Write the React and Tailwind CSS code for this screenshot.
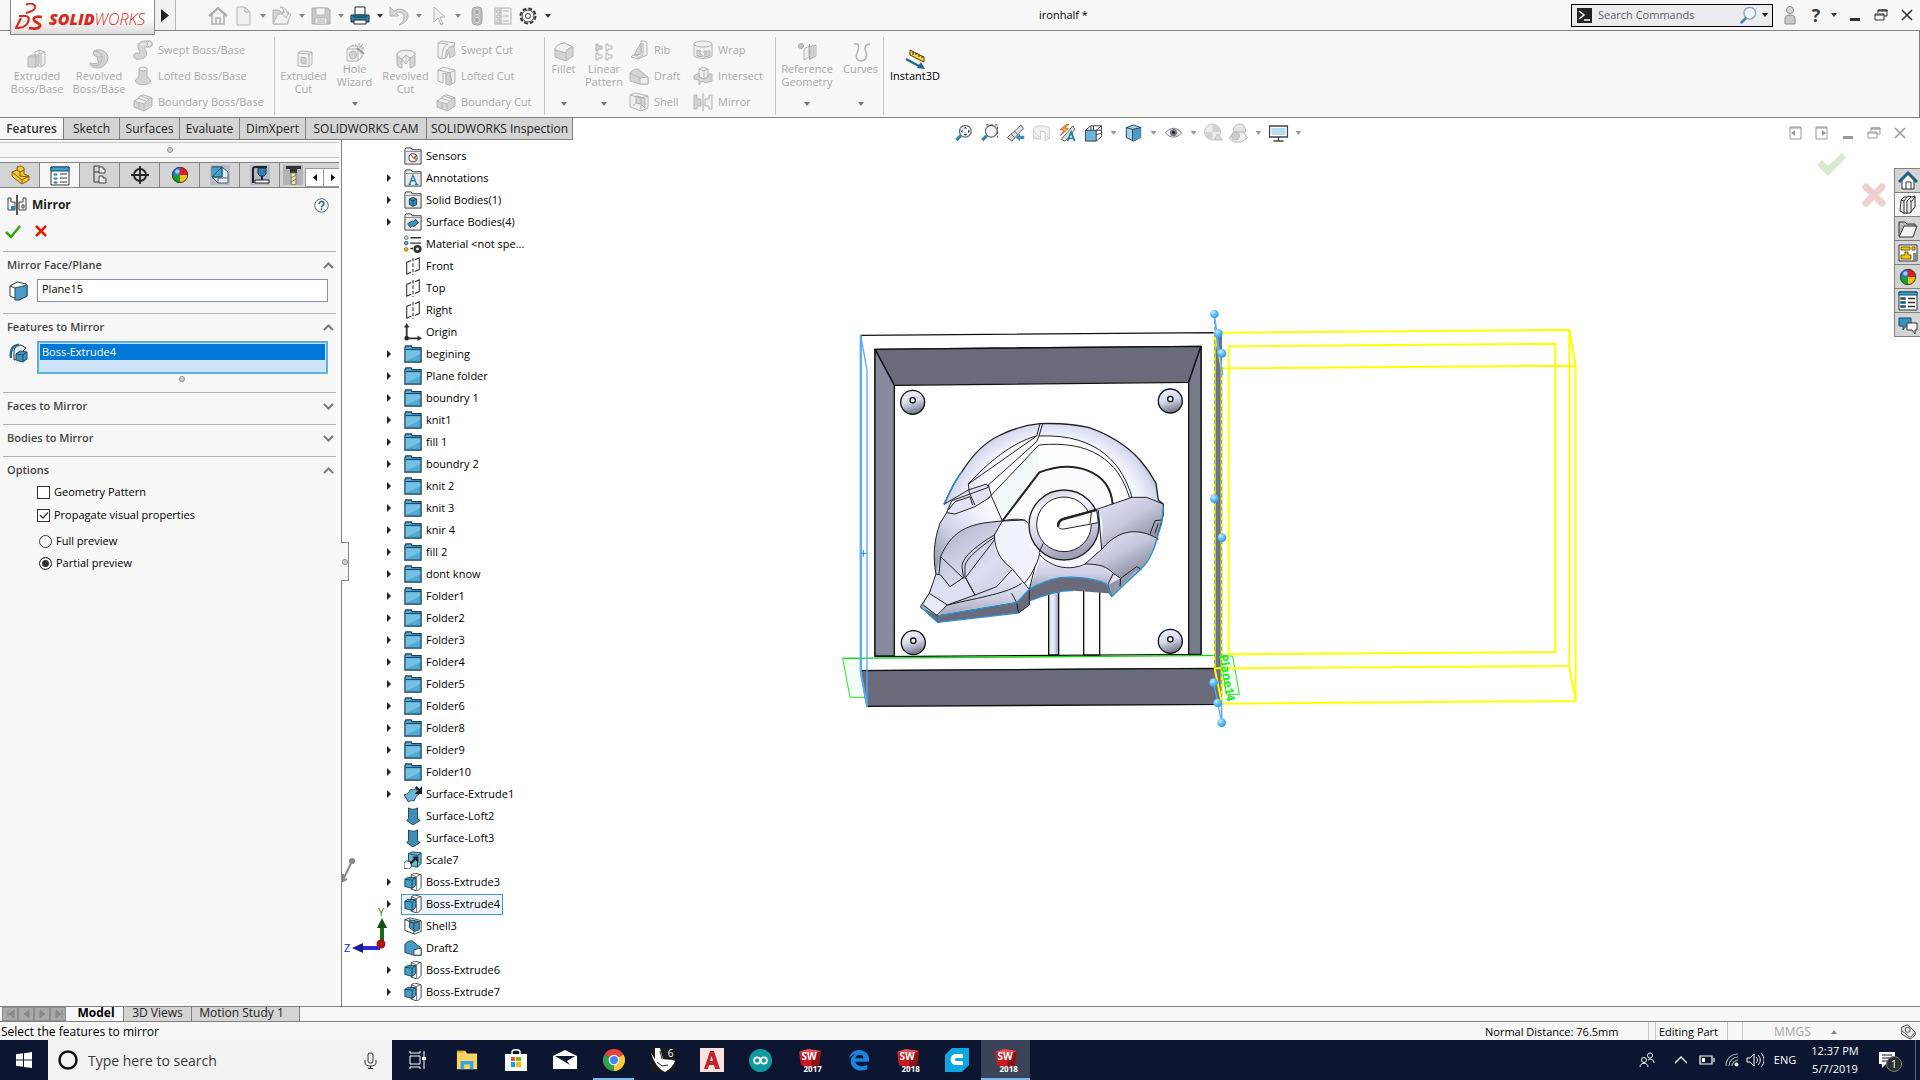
import React from "react";

const Svg = ({ s = 20, vb = "0 0 20 20", className = "", children }) => (
  <svg width={s} height={s} viewBox={vb} fill="none" aria-hidden="true" className={"shrink-0 " + className}>{children}</svg>
);
const Caret = ({ className = "text-[#555]" }) => (
  <svg width="6" height="4" viewBox="0 0 6 4" aria-hidden="true" className={"shrink-0 " + className}><path d="M0 0h6L3 4z" fill="currentColor" /></svg>
);

/* ---------- ribbon icons ---------- */
const g = { stroke: "#b4b4b4", fill: "#f0f0f0", strokeLinejoin: "round" };
const gd = { stroke: "#b4b4b4", fill: "#d4d4d4", strokeLinejoin: "round" };
const R = {
  extBoss: <Svg><path {...g} d="M8 3l4-2 6 2v12l-4 3-6-3z" /><path stroke="#b4b4b4" d="M12 1v3l2 1v13M14 5l4-2" /><path {...gd} d="M1 8l3-2h8v9l-3 3H1z" /><path stroke="#b4b4b4" d="M1 8h8v10M9 8l3-2" /></Svg>,
  revBoss: <Svg><path {...gd} d="M5 2c6-3 13 0 14 6 0 6-5 11-11 11-4 0-7-2-7-5 3 1 7 1 9-1-2-1-2-3-1-5-3 0-6-3-4-6z" /><path stroke="#b4b4b4" d="M5 2c4 0 8 2 8 6s-1 7-5 9M9 8l4 0M1 14c2 2 5 3 7 3" /></Svg>,
  swept: <Svg><path {...gd} d="M1 15c0-2 4-3 5-1 1-1 0-4-1-7-1-4 3-6 7-6h5c3 1 3 5 0 6h-4c-2 0-1 2 0 4 2 5-2 8-6 8-4 1-7-1-6-4z" /><ellipse cx="16.500" cy="4" rx="2" ry="3" {...g} /><path stroke="#fff" d="M8 5c1-1 3-1 5-1" /></Svg>,
  loft: <Svg><path {...gd} d="M6 3h8v7l4 5c-2 5-14 5-16 0l4-5z" /><ellipse cx="10" cy="3" rx="4" ry="2" {...g} /></Svg>,
  boundary: <Svg><path {...gd} d="M1 9c4-1 5-6 10-6l8 3v8l-8 5-10-4z" /><path {...g} d="M1 9c4-1 5-6 10-6l8 3c-4 1-5 3-8 6z" /><path stroke="#b4b4b4" d="M11 12v7M5 6l8 3M8 4l8 3M6 11v6" /></Svg>,
  extCut: <Svg><path {...g} d="M4 4l3-2 11 1v12l-3 3-11-1z" /><path {...g} d="M4 4l11 1v13" /><path {...gd} d="M7 8l5 1v6l-5-1z" /><path stroke="#b4b4b4" d="M15 5l3-2" /></Svg>,
  hole: <Svg><path {...g} d="M2 7l4-3h11v11l-4 4H2z" /><path stroke="#b4b4b4" d="M2 7h11v12M13 7l4-3" /><ellipse cx="8" cy="13" rx="3.500" ry="4" {...gd} /><path stroke="#999" strokeWidth="2" d="M12 6l7 6" /><path stroke="#aaa" d="M10 2l1 2M14 1v2M18 2l-2 2M19 6h-2M7 3l2 1" /></Svg>,
  revCut: <Svg><path {...gd} d="M1 5c2-5 16-5 18 0v11c-1 2-4 3-5 3V9l-4-3-4 4v9c-2 0-4-1-5-3z" /><path {...g} d="M1 5c2-5 16-5 18 0-1 2-3 3-5 4l-4-3-4 4c-2-1-5-3-5-5z" /><path stroke="#b4b4b4" d="M10 6v9M6 10l4 5 4-6" /></Svg>,
  swCut: <Svg><path {...g} d="M2 3l4-2 13 2-1 3c-5 0-8 4-8 9v3l-5 1-3-2z" /><path {...gd} d="M10 15c0-5 3-9 8-9l1 9-5 3-1-6-3 6z" /><path stroke="#b4b4b4" d="M2 3l10 1c-4 2-6 6-6 14" /></Svg>,
  loftCut: <Svg><path {...g} d="M2 4l5-3 12 3v12l-5 3-4-1V8L7 7v10l-5-2z" /><path {...gd} d="M10 8l4-2 2 11-2 2-4-1z" /><path stroke="#b4b4b4" d="M2 4l12 3v12M14 7l5-3" /></Svg>,
  fillet: <Svg><path {...gd} d="M1 8c0-4 4-6 9-7l9 4v9l-7 5-11-4z" /><path {...g} d="M1 8c0-4 4-6 9-7l9 4c-5 1-7 3-7 6z" /><path stroke="#b4b4b4" d="M12 11v8" /></Svg>,
  linear: <Svg><path {...gd} d="M2 2h2v2h4v3H4v2H2z" /><path {...g} fill="none" d="M12 2h2v2h4v3h-4v2h-2zM2 11h2v2h4v3H4v2H2zM12 11h2v2h4v3h-4v2h-2z" /></Svg>,
  rib: <Svg><path {...g} d="M12 1h4l2 2v12l-9 4-7-2 2-2 4 1 4-3z" /><path {...gd} d="M12 3v11L5 15z" /><path stroke="#b4b4b4" d="M14 3v12l-6 3" /></Svg>,
  draft: <Svg><path {...gd} d="M1 7c3-4 6-4 8-4l10 8v7H11L1 15z" /><path {...g} d="M11 12l8-1v7h-8z" /><path stroke="#b4b4b4" d="M1 7l10 5" /></Svg>,
  shell: <Svg><path {...g} d="M1 3l6-2 12 3v12l-7 3-11-4z" /><path {...gd} d="M7 4l9 2v10l-4-4-5-1z" /><path stroke="#b4b4b4" d="M1 3l11 3v13M12 6l7-2M7 11l-3 3" /></Svg>,
  wrap: <Svg><path {...g} d="M1 4v12c2 3 16 3 18 0V4" /><ellipse cx="10" cy="4" rx="9" ry="3" {...g} /><path {...gd} d="M4 10l4 1v1H6l3 3v2l-5-1zM11 11h6v5l-6 1v-2l3-2h-3z" /></Svg>,
  intersect: <Svg><path {...g} d="M6 3l4-2 5 2v8l-4 2-5-2z" /><path {...gd} d="M1 10l5-3v4l5 2 4-2V8l4 0v7l-6 2-4-2-3 4v-5l-5-1z" /><path stroke="#b4b4b4" d="M6 3l5 2v8M11 5l4-2" /></Svg>,
  mirror: <Svg><path stroke="#aaa" d="M10 1v18" /><path {...gd} d="M1 3h3v4h4v7H4v3H1z" /><path {...g} d="M19 3h-3v4h-4v7h4v3h3z" /></Svg>,
  refGeo: <Svg><circle cx="4" cy="4" r="2.500" fill="#c4c4c4" stroke="#aaa" /><path {...g} d="M7 7l5-3v11l-5 3zM13 5l6-2v11l-6 3z" /><path {...gd} d="M13 5l4-2v12l-4 2z" /><path stroke="#aaa" strokeDasharray="4 2" d="M12.500 2v17" /></Svg>,
  curves: <Svg><path stroke="#b4b4b4" strokeWidth="1.500" d="M3 2c6-2 5 5 3 9s0 8 4 8 7-4 5-9-1-8 4-8" /><circle cx="18" cy="2.500" r="1" fill="#bbb" /></Svg>,
  instant: <Svg><path d="M5 1l14 7v5L5 6z" fill="#ffd83a" stroke="#4a3a05" /><path d="M8 3v3M11 4v2M14 6v2M17 7v2" stroke="#222" /><path d="M1 10l13 7" stroke="#226488" strokeWidth="2" /><path d="M12 19l8 1-4-7z" fill="#226488" /></Svg>,
};

const Big = ({ icon, lines, w, low, caret, dark }) => (
  <button className={`flex h-full flex-col items-center text-center leading-[13px] ${w} ${low ? "pt-[18px]" : "pt-[11px]"} ${dark ? "text-black" : "text-[#a9a9a9]"}`}>
    {icon}
    {lines.map((l) => <span key={l} className="whitespace-nowrap">{l}</span>)}
    {caret && <span className="mt-auto pb-[11px]"><Caret className="text-[#777]" /></span>}
  </button>
);
const Col = ({ items, w }) => (
  <div className={`flex flex-col pt-[6px] pl-[3px] ${w}`}>
    {items.map(([icon, t]) => (
      <button key={t} className="flex h-[26px] items-center gap-[5px] whitespace-nowrap text-[#a9a9a9]">{icon}{t}</button>
    ))}
  </div>
);
const Sep = () => <div className="mt-[6px] h-[78px] w-px bg-[#c6c6c6]" />;

function TitleBar() {
  const c = "flex h-full w-[19px] items-center justify-center";
  const q = "#b0b0b0";
  return (
    <header className="relative z-10 flex h-[31px] shrink-0 items-center border-b border-[#808080] bg-[#f7f7f7]">
      <div className="ml-[10px] flex h-[35px] w-[145px] items-center self-start border-r border-b border-l border-[#858585] bg-gradient-to-b from-white via-white to-[#dcdcdc] pl-[4px] text-[#da291c]">
        <svg width="30" height="28" viewBox="0 0 30 28" fill="none" aria-hidden="true">
          <path d="M11 2c4-3 10-1 9 3-1 3-5 4-9 5" stroke="#da291c" strokeWidth="2" />
          <path d="M4 13h6c4 0 5 3 2 8-2 3-5 4-11 4l5-10" stroke="#da291c" strokeWidth="2.200" />
          <path d="M27 14c-5-1-9 0-8 3s7 3 6 6c-1 3-6 3-11 2" stroke="#da291c" strokeWidth="2.800" />
        </svg>
        <span className="pt-1 pl-[4px] text-[16px] leading-4 italic"><b className="font-extrabold">SOLID</b><span className="font-light">WORKS</span></span>
      </div>
      <button aria-label="Expand menu" className="flex h-[30px] w-[21px] items-center justify-center border-r border-[#b5b5b5] bg-[#f1f1f1]">
        <svg width="8" height="13" aria-hidden="true"><path d="M0 0l8 6.500L0 13z" fill="#222" /></svg>
      </button>
      <nav className="ml-[32px] flex h-full items-center pt-px">
        <button aria-label="Home" className="mr-[5px]"><Svg><path d="M2 10l8-8 8 8M4 9v9h12V9M8 18v-6h4v6" stroke={q} strokeWidth="1.500" fill="#f0f0f0" /><path d="M1 10l9-8 9 8" stroke="#aaa" strokeWidth="2" /></Svg></button>
        <button aria-label="New"><Svg><path d="M4 1h8l5 5v13H4z" {...g} /><path d="M12 1v5h5" stroke={q} /></Svg></button>
        <button aria-label="New options" className={c}><Caret className="text-[#888]" /></button>
        <button aria-label="Open"><Svg><path d="M1 4h6l2 2h7v12H1z" {...gd} /><path d="M1 18l5-10h13l-4 10z" {...g} /><path d="M8 1c5 0 7 3 7 6l2-1-3 6-4-5 2 0c0-3-1-5-4-6z" {...g} /></Svg></button>
        <button aria-label="Open options" className={c}><Caret className="text-[#888]" /></button>
        <button aria-label="Save"><Svg><path d="M1 2h16l2 2v14H1z" fill="#c9c9c9" stroke="#a8a8a8" /><path d="M5 2h9v7H5zM4 12h12v6H4z" fill="#f5f5f5" stroke="#b4b4b4" /><path d="M6 14h8M6 16h8" stroke="#aaa" /></Svg></button>
        <button aria-label="Save options" className={c}><Caret className="text-[#888]" /></button>
        <button aria-label="Print"><Svg><path d="M5 1h10v8H5z" fill="#fff" stroke="#222" /><path d="M1 9h18v7H1z" fill="#2e81a8" stroke="#0e3850" /><path d="M3 11h14" stroke="#0e3850" /><path d="M4 14h12v4H4z" fill="#fff" stroke="#222" /></Svg></button>
        <button aria-label="Print options" className={c}><Caret className="text-[#333]" /></button>
        <button aria-label="Undo"><Svg><path d="M1 1v9h9L7 7c4-2 8 0 8 4s-2 6-5 8c6-2 9-5 9-9 0-6-8-9-14-5z" {...gd} /></Svg></button>
        <button aria-label="Undo options" className={c}><Caret className="text-[#888]" /></button>
        <button aria-label="Select"><Svg><path d="M6 1v15l4-4 3 7 2-1-3-7h5z" {...g} /></Svg></button>
        <button aria-label="Select options" className={c}><Caret className="text-[#888]" /></button>
        <button aria-label="Rebuild"><Svg><rect x="5" y="1" width="10" height="18" rx="4" fill="#bcbcbc" stroke="#aaa" /><circle cx="10" cy="6" r="2.500" fill="#a0a0a0" stroke="#ddd" /><circle cx="10" cy="14" r="2.500" fill="#a0a0a0" stroke="#ddd" /></Svg></button>
        <button aria-label="File properties" className="ml-[6px]"><Svg><path d="M2 2h16v16H2z" {...g} /><path d="M4 4h3v3H4zM4 9h3v3H4zM4 14h3v3H4zM10 5h6M10 10h6M10 15h6M8 2v16" stroke="#b0b0b0" /></Svg></button>
        <button aria-label="Options" className="ml-[5px]"><Svg><circle cx="10" cy="10" r="7.500" stroke="#3a3a3a" strokeWidth="2" strokeDasharray="3.900 2" /><circle cx="10" cy="10" r="6" stroke="#3a3a3a" fill="#f7f7f7" /><circle cx="10" cy="10" r="2.500" stroke="#3a3a3a" /></Svg></button>
        <button aria-label="More options" className={c}><Caret className="text-[#333]" /></button>
      </nav>
      <h1 className="ml-[482px] flex-1 pt-px text-[11px] whitespace-nowrap text-black">ironhalf *</h1>
      <div className="flex h-[23px] w-[202px] items-center border border-black bg-[#ebebf0] pr-1 pl-[5px]">
        <Svg s={15} vb="0 0 15 15"><path d="M0 0h15v15H0z" fill="#222" /><path d="M2 3l5 4-5 4M7 12h6" stroke="#fff" strokeWidth="1.500" /></Svg>
        <input aria-label="Search Commands" placeholder="Search Commands" className="ml-[6px] w-full min-w-0 bg-transparent text-[11px] outline-none placeholder:text-[#5f5f5f]" />
        <button aria-label="Search"><Svg s={18}><circle cx="12" cy="8" r="6.500" fill="#eef6fc" stroke="#8fa5b5" strokeWidth="1.500" /><path d="M8 13l-6 6" stroke="#4a86b0" strokeWidth="3" /></Svg></button>
        <button aria-label="Search options" className="ml-[5px]"><Caret className="text-[#222]" /></button>
      </div>
      <button aria-label="Sign in" className="ml-[7px]"><Svg><path d="M5 19v-6c0-4 10-4 10 0v6z" fill="#c8c8c8" stroke="#8b8b8b" /><circle cx="10" cy="5" r="3.500" fill="#d8d8d8" stroke="#8b8b8b" /></Svg></button>
      <button aria-label="Help" className="ml-[7px] w-[18px] text-[18px] leading-5 font-bold text-[#3c3c3c]">?</button>
      <button aria-label="Help options" className="w-[17px] pl-[6px]"><Caret className="text-[#333]" /></button>
      <WinButtons color="#333" />
    </header>
  );
}
const WinButtons = ({ color, className = "" }) => (
  <div className={"flex items-center " + className}>
    <button aria-label="Minimize" className="w-[26px] pl-[5px]"><Svg s={16} vb="0 0 16 16"><path d="M3 11h10v3H3z" fill={color} /></Svg></button>
    <button aria-label="Restore" className="w-[26px] pl-[5px]"><Svg s={16} vb="0 0 16 16"><path d="M5 6V3h9v6h-3M5 3h9v1H5M2 7h9v6H2zM2 8h9" stroke={color} /></Svg></button>
    <button aria-label="Close" className="w-[26px] pl-[5px]"><Svg s={16} vb="0 0 16 16"><path d="M3 3l10 10M13 3L3 13" stroke={color} strokeWidth="1.500" /></Svg></button>
  </div>
);

function Ribbon() {
  return (
    <div className="flex h-[87px] shrink-0 border-r border-b border-[#808080] bg-[#f7f7f7] pl-[6px] text-[11px]">
      <Big low w="w-[62px]" icon={R.extBoss} lines={["Extruded", "Boss/Base"]} />
      <Big low w="w-[62px]" icon={R.revBoss} lines={["Revolved", "Boss/Base"]} />
      <Col w="w-[144px]" items={[[R.swept, "Swept Boss/Base"], [R.loft, "Lofted Boss/Base"], [R.boundary, "Boundary Boss/Base"]]} />
      <Sep />
      <div className="w-[3px]" />
      <Big low w="w-[51px]" icon={R.extCut} lines={["Extruded", "Cut"]} />
      <Big caret w="w-[51px]" icon={R.hole} lines={["Hole", "Wizard"]} />
      <Big low w="w-[51px]" icon={R.revCut} lines={["Revolved", "Cut"]} />
      <div className="w-[2px]" />
      <Col w="w-[111px]" items={[[R.swCut, "Swept Cut"], [R.loftCut, "Lofted Cut"], [R.boundary, "Boundary Cut"]]} />
      <Sep />
      <Big caret w="w-[37px]" icon={R.fillet} lines={["Fillet"]} />
      <Big caret w="w-[44px]" icon={R.linear} lines={["Linear", "Pattern"]} />
      <Col w="w-[64px]" items={[[R.rib, "Rib"], [R.draft, "Draft"], [R.shell, "Shell"]]} />
      <Col w="w-[85px]" items={[[R.wrap, "Wrap"], [R.intersect, "Intersect"], [R.mirror, "Mirror"]]} />
      <Sep />
      <Big caret w="w-[62px]" icon={R.refGeo} lines={["Reference", "Geometry"]} />
      <Big caret w="w-[45px]" icon={R.curves} lines={["Curves"]} />
      <Sep />
      <Big low dark w="w-[62px]" icon={R.instant} lines={["Instant3D"]} />
    </div>
  );
}

const TABS = [["Features", "w-[63px]"], ["Sketch", "w-[56px]"], ["Surfaces", "w-[60px]"], ["Evaluate", "w-[60px]"], ["DimXpert", "w-[66px]"], ["SOLIDWORKS CAM", "w-[121px]"], ["SOLIDWORKS Inspection", "w-[147px]"]];

/* ---------- property manager ---------- */
const Ball = () => (
  <Svg s={18} vb="0 0 20 20"><path d="M10 10V1a9 9 0 0 0-9 9z" fill="#2b6fe0" /><path d="M10 10V1a9 9 0 0 1 9 9z" fill="#e01b1b" /><path d="M10 10H1a9 9 0 0 0 9 9z" fill="#1e9e28" /><path d="M10 10h9a9 9 0 0 1-9 9z" fill="#f2c21c" /><circle cx="10" cy="10" r="8.500" stroke="#333" /><circle cx="7" cy="6" r="2.500" fill="#fff" opacity=".6" /></Svg>
);
const PTABS = [
  ["Feature tree", <Svg><path d="M2 7l5-2 0-3 4-1 3 2v6l5 2v4l-7 4-8-6-2-2z" fill="#f5c93a" stroke="#7c5a08" /><path d="M7 5l3 2v4l9 1M10 7l4-2M12 15l7-4M12 15v3M2 7l10 8" stroke="#7c5a08" /></Svg>],
  ["Property manager", <Svg><path d="M1 1h18v18H1z" fill="#fff" stroke="#333" /><path d="M1 1h18v4H1z" fill="#3aa0cf" stroke="#164f6d" /><path d="M4 8h3v1H4zM4 12h3v1H4zM4 16h3v1H4z" stroke="#1a6b92" /><path d="M10 8h7M10 12h7M10 16h7" stroke="#333" /></Svg>],
  ["Configurations", <Svg><path d="M4 1h6M4 1v16h5M4 7h5" stroke="#333" /><path d="M9 2h4v2h2v4H9zM9 11h4v2h3v5H9z" fill="#eee" stroke="#444" /></Svg>],
  ["DimXpert", <Svg><circle cx="10" cy="10" r="6" stroke="#222" strokeWidth="1.800" /><path d="M10 1v18M1 10h18" stroke="#222" strokeWidth="1.800" /></Svg>],
  ["Display", <Ball />],
  ["CAM feature", <Svg><path d="M0 0h20v20H0z" fill="#b9bcc2" /><path d="M2 2h10l6 5v11H8l-6-6z" fill="#dfeff8" stroke="#557" /><path d="M2 12L12 2v10zM2 2h10v10H2" fill="#4aa0cc" stroke="#1d5d80" /><path d="M8 18v-5h10" stroke="#557" /></Svg>],
  ["CAM operation", <Svg><path d="M0 0h20v20H0z" fill="#b4b8c0" /><path d="M3 18V4c0-2 1-2 3-2h11" stroke="#222" strokeWidth="2" /><path d="M8 3h8v6l-2 2h-4L8 9z" fill="#2f83b5" stroke="#134" /><path d="M5 15h14v3H5z" fill="#fff" stroke="#222" /><path d="M12 11v4" stroke="#225" strokeWidth="2" /></Svg>],
  ["CAM tools", <Svg><path d="M0 0h20v20H0z" fill="#b4b4b8" /><path d="M3 1h15v3H3zM7 4h7v4H7z" fill="#333" /><path d="M8 8h5v11l-3 1-2-1z" fill="#f6e9a8" stroke="#776" /><path d="M8 13l5-3M8 17l5-3" stroke="#776" /></Svg>],
];
const Chev = ({ up }) => (
  <svg width="11" height="7" viewBox="0 0 11 7" fill="none" aria-hidden="true"><path d={up ? "M1 6l4.500-4.500L10 6" : "M1 1l4.500 4.500L10 1"} stroke="#7b7b7b" strokeWidth="2" /></svg>
);
const Section = ({ title, up, children, className = "" }) => (
  <section className={"mr-[5px] ml-[3px] border-t border-[#b3b3b3] pl-[4px] " + className}>
    <button className="flex h-[27px] w-full items-center justify-between pr-[2px] text-[11px] font-semibold text-[#444]">{title}<Chev up={up} /></button>
    {children}
  </section>
);
const Grip = () => <span className="block size-[6px] rounded-full border border-[#8f8f8f] bg-[#cfcfcf]" />;

function PropertyPanel() {
  return (
    <aside className="relative flex w-[342px] shrink-0 flex-col border-r border-[#858585] bg-[#f7f7f7] pt-[2px] text-[11px]">
      <div className="mr-[2px] flex h-[16px] items-center justify-center border-y border-[#c6c6c6]"><Grip /></div>
      <div className="mt-[4px] mr-[2px] flex h-[26px] overflow-hidden border-y border-[#858585]">
        {PTABS.map(([n, ic], i) => (
          <button key={n} aria-label={n} className={"flex w-[40px] shrink-0 items-center justify-center border-r border-[#858585] " + (i === 1 ? "-mb-px h-[25px] bg-[#f7f7f7]" : "bg-[#d4d4d4]") + (i === 7 ? " w-[25px]! border-r-0!" : "")}>{ic}</button>
        ))}
        <div className="flex flex-1 items-end bg-[#d4d4d4]">
          <button aria-label="Previous tab" className="flex h-[19px] w-[19px] items-center justify-center border border-[#9a9a9a] bg-white"><svg width="4" height="7"><path d="M4 0v7L0 3.500z" /></svg></button>
          <button aria-label="Next tab" className="flex h-[19px] w-[17px] items-center justify-center border-y border-[#9a9a9a] bg-white"><svg width="4" height="7"><path d="M0 0v7l4-3.500z" /></svg></button>
        </div>
      </div>
      <div className="mt-[5px] flex h-[24px] items-center pr-[12px] pl-[7px]">
        <Svg><path d="M10 0v20" stroke="#222" strokeWidth="1.500" /><path d="M1 3h3v4h4v8H1zM19 3h-3v4h-4v8h7z" stroke="#444" /><path d="M4 11h4v4H4z" fill="#2b7fab" /><path d="M15 10h2v3h-2z" stroke="#444" /></Svg>
        <h2 className="ml-[5px] flex-1 text-[12px] font-bold text-[#222]">Mirror</h2>
        <button aria-label="Help"><Svg s={15} vb="0 0 16 16"><circle cx="8" cy="8" r="7.200" stroke="#555" fill="#fff" /><path d="M5.500 6.500c0-4 5.500-3.500 5 0-.3 1.500-2.500 1.500-2.500 3.500M8 11v2" stroke="#2a6f99" strokeWidth="1.800" /></Svg></button>
      </div>
      <div className="mt-[2px] mb-[9px] flex h-[23px] items-center gap-[14px] pl-[5px]">
        <button aria-label="OK"><Svg s={16} vb="0 0 16 16"><path d="M1 9l5 5 9-11" stroke="#33a40a" strokeWidth="2.500" /></Svg></button>
        <button aria-label="Cancel"><Svg s={12} vb="0 0 12 12"><path d="M1 1l10 10M11 1L1 11" stroke="#e01b00" strokeWidth="2.500" /></Svg></button>
      </div>
      <Section title="Mirror Face/Plane" up>
        <div className="flex items-center pb-[11px]">
          <Svg className="ml-[2px]"><path d="M1 5l7-4 9 2 1 2v10l-8 4-9-4z" fill="#fff" stroke="#333" /><path d="M6 7l12-3v11l-8 4H6z" fill="#4a9cc4" stroke="#1f4e6b" /><path d="M1 5l5 2" stroke="#333" /></Svg>
          <input aria-label="Mirror Face/Plane" defaultValue="Plane15" className="mr-[8px] ml-[8px] h-[23px] min-w-0 flex-1 border border-[#8890a3] bg-white px-[4px] pb-1 text-black outline-none" />
        </div>
      </Section>
      <Section title="Features to Mirror" up>
        <div className="flex items-start">
          <Svg className="mt-[2px] ml-[2px]"><path d="M5 17V7c1-3 3-5 7-5l5 3-3 3-4 8z" fill="#e8e8e8" stroke="#333" /><path d="M2 15C1 8 3 2 10 2" stroke="#1f6b92" strokeWidth="2.500" /><path d="M7 11l4-3 7 1v7l-4 3-7-2z" fill="#3c92bc" stroke="#1f4e6b" /><path d="M7 11l7 1v7M14 12l4-3" stroke="#1f4e6b" /></Svg>
          <ul role="listbox" aria-label="Features to Mirror" className="mr-[8px] ml-[8px] h-[33px] flex-1 border-2 border-[#5fb0e3] bg-[#cfe3f8] p-px">
            <li role="option" aria-selected="true" className="h-[16px] bg-[#0078d7] px-[2px] leading-[15px] text-white">Boss-Extrude4</li>
          </ul>
        </div>
        <div className="flex h-[18px] justify-center pt-[2px] pl-[20px]"><Grip /></div>
      </Section>
      <Section title="Faces to Mirror" className="h-[32px]" />
      <Section title="Bodies to Mirror" className="h-[32px]" />
      <Section title="Options" up>
        <div className="flex flex-col pl-[30px] text-black">
          <label className="flex h-[23px] items-center gap-[4px] pb-[6px]"><input type="checkbox" className="size-[13px] appearance-none border border-[#333] bg-white" />Geometry Pattern</label>
          <label className="relative flex h-[23px] items-center gap-[4px] pb-[6px]">
            <input type="checkbox" defaultChecked className="peer size-[13px] appearance-none border border-[#333] bg-white" />
            <svg width="13" height="13" fill="none" aria-hidden="true" className="pointer-events-none absolute left-0 hidden peer-checked:block"><path d="M3 6l3 3 5-5.500" stroke="#333" strokeWidth="1.300" /></svg>
            Propagate visual properties
          </label>
          <label className="flex h-[22px] items-center gap-[4px] pl-[2px]"><input type="radio" name="preview" className="size-[13px] appearance-none rounded-full border border-[#333] bg-white" />Full preview</label>
          <label className="flex h-[22px] items-center gap-[4px] pl-[2px]"><input type="radio" name="preview" defaultChecked className="size-[13px] appearance-none rounded-full border border-[#333] bg-white checked:bg-[#333] checked:shadow-[inset_0_0_0_2px_white]" />Partial preview</label>
        </div>
      </Section>
      <button aria-label="Collapse panel" className="absolute top-[402px] -right-[8px] z-10 flex h-[39px] w-[8px] items-center justify-center border-y border-r border-[#858585] bg-[#f7f7f7]"><Grip /></button>
    </aside>
  );
}

/* ---------- feature tree ---------- */
const TI = ({ children }) => <Svg s={18}>{children}</Svg>;
const GreyFolder = ({ children }) => <TI><path d="M1 19V3l1-2h6l1 2h10v16z" fill="#e9e9e9" stroke="#333" /><path d="M2 5h17" stroke="#888" />{children}</TI>;
const bs = "#173f58";
const T = {
  sensor: <GreyFolder><circle cx="10" cy="12" r="4.500" fill="#fff" stroke="#333" /><path d="M10 12l3-3v6z" fill="#e33b1a" /><path d="M10 12L8 9" stroke="#333" /></GreyFolder>,
  annot: <GreyFolder><path d="M6 17l4-10 4 10M8 13h5M5 17h3M12 17h4" stroke="#2b7fab" strokeWidth="1.500" /></GreyFolder>,
  solid: <GreyFolder><path d="M6 9l4-2 4 2v6l-4 2-4-2z" fill="#3c92bc" stroke={bs} /><path d="M6 9l4 2 4-2M10 11v6" stroke={bs} /></GreyFolder>,
  surface: <GreyFolder><path d="M4 12l5-3c2 1 3-1 4-2l3 4-5 4c-2-1-3 0-4 1z" fill="#3c92bc" stroke={bs} /></GreyFolder>,
  material: <TI><circle cx="2.500" cy="3" r="2" fill="#ddd" stroke="#666" /><circle cx="2.500" cy="9" r="2" fill="#5ab5e0" stroke="#357" /><circle cx="2.500" cy="16" r="2" fill="#f4c411" stroke="#860" /><path d="M7 3h12M7 9h12M7 15h3" stroke="#333" strokeWidth="1.500" /><circle cx="15" cy="15.500" r="3" stroke="#333" strokeWidth="3" /></TI>,
  plane: <TI><path d="M8 4L3 6v13l5-2M12 3l5-2v13l-5 2" stroke="#333" strokeWidth="1.200" /><path d="M10 1v19" stroke="#333" strokeWidth="1.200" strokeDasharray="4 2" /></TI>,
  origin: <TI><path d="M3 17V3M3 17h15" stroke="#333" strokeWidth="2" /><path d="M0 5l3-5 3 5zM15 14l5 3-5 3z" fill="#333" /><circle cx="3" cy="17" r="2.500" fill="#222" /></TI>,
  folder: <TI><path d="M1 19V3l1-2h6l1 2h10v16z" fill="#52a9d3" stroke={bs} strokeWidth="1.300" /><path d="M2 6h16v4L2 18z" fill="#8fd0ef" opacity=".6" /><path d="M2 5h17" stroke={bs} /></TI>,
  surfEx: <TI><path d="M0 11c4-1 5-2 7-6 3 1 4 0 6-1l4 6c-3 1-4 4-6 8-2-2-4 0-6 1z" fill="#6db3d2" stroke={bs} /><path d="M13 2l5 5" stroke="#222" strokeWidth="2.500" /><path d="M20 1v9h-8z" fill="#222" /></TI>,
  surfLoft: <TI><path d="M5 1c3 2 7 2 10 0v12l3 2-8 5-7-5 2-2z" fill="#3f8fb5" stroke={bs} /></TI>,
  scale: <TI><path d="M5 3l4-2 10 1v12l-4 4-10-2z" fill="#6db3d2" stroke={bs} /><path d="M5 3l10 2v13M15 5l4-3" stroke={bs} /><path d="M0 13l3-2 5 1v6l-3 2-5-1z" fill="#fff" stroke="#333" /><path d="M7 14l6-6" stroke="#222" strokeWidth="2.500" /><path d="M9 6h7v7z" fill="#222" /></TI>,
  boss: <TI><path d="M8 2l4-2 7 2v14l-4 4-7-2z" fill="#fff" stroke="#333" /><path d="M8 2l6 2v15M14 4l4-2" stroke="#666" /><path d="M1 7l3-2h9v9l-4 3-8-2z" fill="#4a9cc4" stroke={bs} /><path d="M1 7l8 1v9M9 8l4-3" stroke={bs} /></TI>,
  shell: <TI><path d="M1 3l6-2 12 3v12l-7 3-11-4z" fill="#fff" stroke="#333" /><path d="M6 3l11 2v9l-5 2-6-4z" fill="#3f93bb" stroke={bs} /><path d="M1 3l10 4v12M11 7l8-3" stroke="#333" fill="none" /></TI>,
  draft: <TI><path d="M1 6c3-4 6-4 8-4l10 8v8H11L1 15z" fill="#4a9cc4" stroke={bs} /><path d="M11 12l8-2v8h-8z" fill="#fff" stroke="#333" /></TI>,
};
const ROWS = [
  ["sensor", "Sensors"], ["annot", "Annotations", 1], ["solid", "Solid Bodies(1)", 1], ["surface", "Surface Bodies(4)", 1], ["material", "Material <not spe..."],
  ["plane", "Front"], ["plane", "Top"], ["plane", "Right"], ["origin", "Origin"],
  ...["begining", "Plane folder", "boundry 1", "knit1", "fill 1", "boundry 2", "knit 2", "knit 3", "knir 4", "fill 2", "dont know", "Folder1", "Folder2", "Folder3", "Folder4", "Folder5", "Folder6", "Folder8", "Folder9", "Folder10"].map((n) => ["folder", n, 1]),
  ["surfEx", "Surface-Extrude1", 1], ["surfLoft", "Surface-Loft2"], ["surfLoft", "Surface-Loft3"], ["scale", "Scale7"], ["boss", "Boss-Extrude3", 1], ["boss", "Boss-Extrude4", 1, 1], ["shell", "Shell3"], ["draft", "Draft2"], ["boss", "Boss-Extrude6", 1], ["boss", "Boss-Extrude7", 1],
];
const Tree = () => (
  <ul className="relative w-max pt-[5px] pl-[45px] text-[11px] text-black">
    {ROWS.map(([k, n, ex, sel]) => (
      <li key={n} className="flex h-[22px] items-center">
        <span className="w-[14px]">{ex ? <svg width="4" height="8" aria-hidden="true"><path d="M0 0l4 4-4 4z" fill="#222" /></svg> : null}</span>
        <button className={"flex h-[21px] items-center gap-[4px] border pr-[2px] pl-[2px] whitespace-nowrap " + (sel ? "border-[#4a96c8] bg-[#edf3fa]" : "border-transparent")}>
          {T[k]}<span>{n}</span>
        </button>
      </li>
    ))}
  </ul>
);

/* ---------- model view ---------- */
const Screw = ({ x, y }) => <g><circle cx={x} cy={y} r="36" fill="url(#screw)" stroke="#111" strokeWidth="4" /><circle cx={x} cy={y - 6} r="8" fill="#fff" stroke="#111" strokeWidth="4" /></g>;
const Dot = ({ x, y }) => <circle cx={x} cy={y} r="13" fill="url(#dot)" />;
function Model() {
  return (
    <svg viewBox="342 140 1578 866" preserveAspectRatio="xMinYMin meet" className="pointer-events-none absolute inset-0 h-full w-full" fill="none" aria-hidden="true">
      <defs>
        <linearGradient id="screw" x1="0" y1="0" x2="0.300" y2="1"><stop offset="0" stopColor="#f0f2ff" /><stop offset=".55" stopColor="#d8dbee" /><stop offset="1" stopColor="#7c7e90" /></linearGradient>
        <radialGradient id="dot" cx=".35" cy=".3" r=".8"><stop offset="0" stopColor="#c4ecff" /><stop offset=".5" stopColor="#5cbdf5" /><stop offset="1" stopColor="#2b8fd0" /></radialGradient>
        <radialGradient id="shellg" gradientUnits="userSpaceOnUse" cx="640" cy="600" r="370"><stop offset="0" stopColor="#fbfcff" /><stop offset=".6" stopColor="#f6f9fe" /><stop offset=".85" stopColor="#cdd1e8" /><stop offset="1" stopColor="#a3a6bb" /></radialGradient>
        <radialGradient id="band" gradientUnits="userSpaceOnUse" cx="640" cy="660" r="350"><stop offset="0" stopColor="#fbfdff" /><stop offset=".78" stopColor="#f4f8ff" /><stop offset=".93" stopColor="#d3d7ed" /><stop offset="1" stopColor="#9a9db2" /></radialGradient>
        <linearGradient id="back" x1="0" y1="0" x2=".8" y2="1"><stop offset="0" stopColor="#e3e6f7" /><stop offset=".5" stopColor="#c6c9de" /><stop offset="1" stopColor="#7b7e90" /></linearGradient>
        <linearGradient id="face" x1="0" y1="0" x2=".8" y2="1"><stop offset="0" stopColor="#9a9db3" /><stop offset=".35" stopColor="#c4c8de" /><stop offset=".7" stopColor="#dadef2" /><stop offset="1" stopColor="#cdd0e5" /></linearGradient>
        <linearGradient id="brow" x1="0" y1="1" x2="1" y2="0"><stop offset="0" stopColor="#8c8fa3" /><stop offset=".4" stopColor="#cfd3e9" /><stop offset=".75" stopColor="#f3f6ff" /><stop offset="1" stopColor="#fdfeff" /></linearGradient>
        <linearGradient id="chin" x1="0" y1="0" x2="0" y2="1"><stop offset="0" stopColor="#eaedfb" /><stop offset=".6" stopColor="#cfd2e7" /><stop offset="1" stopColor="#a0a3b8" /></linearGradient>
        <linearGradient id="ring" x1="0" y1="0" x2="0.300" y2="1"><stop offset="0" stopColor="#b9bcd1" /><stop offset=".3" stopColor="#f7f8ff" /><stop offset=".7" stopColor="#ccd0e4" /><stop offset="1" stopColor="#a0a3b8" /></linearGradient>
        <linearGradient id="post" x1="0" y1="0" x2="1" y2="0"><stop offset="0" stopColor="#dfe2f3" /><stop offset=".5" stopColor="#e9ecfa" /><stop offset="1" stopColor="#9699ad" /></linearGradient>
      </defs>

      <g transform="translate(840 310) scale(.33333)" strokeLinejoin="round">
        <path d="M8 1045H90V1162H30z" fill="#f3fdf3" stroke="#2ee02e" strokeWidth="3" />
        <path d="M62 76L1125 68V1075L62 1082z" fill="#fff" stroke="#111" strokeWidth="4" />
        <path d="M105 118L1083 109V1033L105 1040z" fill="#fff" stroke="#111" strokeWidth="4" />
        <path d="M105 118L1083 109L1046 217L163 226z" fill="#696b7b" stroke="#111" strokeWidth="4" />
        <path d="M105 118L163 226V1038H105z" fill="#868a9e" stroke="#111" strokeWidth="4" />
        <path d="M1083 109L1046 217V1033H1083z" fill="#777b8c" stroke="#111" strokeWidth="4" />
        <path d="M62 1082L1125 1075L1144 1183L81 1189z" fill="#696b7b" stroke="#111" strokeWidth="4" />
        <path d="M8 1045L1160 1036" stroke="#18d818" strokeWidth="4" />
        <path d="M1126 70H1146V1180L1126 1075z" fill="#6f7283" />
        <path d="M62 76V1085L81 1189V180z" stroke="#5aa9f5" strokeWidth="4" />
        <path d="M62 76V1085L81 1189" stroke="#5aa9f5" strokeWidth="6" />
        <path d="M62 730h18M70 720v20" stroke="#2b8fd0" strokeWidth="3" />

        <path d="M626 845h30v190h-30z" fill="url(#post)" stroke="#111" strokeWidth="4" />
        <path d="M731 835h48v200h-48z" fill="#fff" stroke="#111" strokeWidth="4" />
        <Screw x={218} y={277} /><Screw x={991} y={273} /><Screw x={220} y={998} /><Screw x={991} y={994} />

        <path d="M293 937L536 909L568 885L570 872C610 858 650 841 700 842L805 850L815 860L905 778L800 780L568 800L300 880L250 895z" fill="#696b7b" />
        <path d="M312 583C325 555 345 510 366 485C400 430 440 395 475 378C515 357 560 345 600 341C650 339 700 342 745 352C800 370 860 405 900 450C930 485 940 505 948 520L955 570L970 582V615L965 640L950 688C940 730 920 765 900 778L815 860L800 822C750 800 690 800 660 803C620 810 590 825 568 838L530 878L293 918L241 890L268 845L288 792C278 740 282 690 300 640L320 608z" fill="url(#shellg)" />
        <path d="M312 583C325 555 345 510 366 485C400 430 440 395 475 378C515 357 560 345 600 341C650 339 700 342 745 352C800 370 860 405 900 450C930 485 940 505 948 520L955 572L876 562C850 480 770 375 597 378C510 400 440 460 385 522L388 540z" fill="url(#band)" />
        <path d="M597 378L590 395L445 525L455 560L487 633L600 485C720 440 800 490 818 583L876 562C850 480 770 375 597 378z" fill="#fcfeff" />
        <path d="M597 405L597 487L487 633L455 560z" fill="#f1f9fc" />
        <path d="M320 608L400 590L450 560L487 633C400 640 340 650 302 740C290 760 288 780 288 792C278 740 282 690 300 640z" fill="url(#brow)" />
        <path d="M312 583L385 540L440 522L450 560L405 585L345 612L320 608z" fill="#dfe3f4" />
        <path d="M487 633C400 640 340 650 302 740L288 792L330 830L375 800L405 855L470 830L520 780L465 720L463 675z" fill="url(#face)" />
        <path d="M288 792L302 795L330 830L375 800L405 855L322 885L268 850z" fill="#dce0f3" />
        <path d="M463 675L487 633C520 625 560 625 563 640C565 700 580 725 600 728C590 770 570 800 555 820L515 775C480 740 465 720 463 675z" fill="#eef3fc" />
        <path d="M405 855L470 830L515 780L545 820L568 838L530 878L293 918L322 885z" fill="url(#chin)" />
        <path d="M268 850L322 885L293 918L250 885z" fill="#e6ecf6" />
        <path d="M568 838C590 780 600 750 600 728C640 780 700 780 735 762L785 718C800 770 790 790 830 790L800 822C750 800 690 800 660 803C620 810 590 825 568 838z" fill="url(#chin)" />
        <path d="M770 598L876 562H920L970 582V615L965 640L950 688C930 665 850 640 785 718L780 650z" fill="url(#back)" />
        <path d="M785 718C850 640 920 665 955 688C940 730 920 765 900 778L842 805L820 790C800 770 770 765 735 762z" fill="url(#back)" />
        <path d="M842 805L900 770L815 860L803 825z" fill="#9497aa" />
        <circle cx="672" cy="656" r="116" fill="#f4f6fd" />
        <circle cx="672" cy="645" r="105" fill="url(#ring)" stroke="#222" strokeWidth="4" />
        <circle cx="672" cy="643" r="82" fill="#fff" stroke="#222" strokeWidth="3" />
        <path d="M770 598L665 626C645 635 650 660 672 657L775 638z" fill="#fbfbff" stroke="#222" strokeWidth="3" />
        <path d="M770 600L668 628C656 634 654 640 655 650" stroke="#222" strokeWidth="7" />

        <g stroke="#222" strokeWidth="3">
          <path d="M312 583C325 555 345 510 366 485C400 430 440 395 475 378C515 357 560 345 600 341C650 339 700 342 745 352C800 370 860 405 900 450C930 485 940 505 948 520L955 570L970 582" strokeWidth="4" />
          <path d="M600 341L590 378L385 522L388 548L405 585M608 341L597 378L590 395L445 525" />
          <path d="M590 378C520 395 440 460 385 522M597 378C780 370 850 470 876 562M597 405C750 390 835 450 868 562M597 405L445 565M445 525L455 560L487 633" />
          <path d="M770 598L876 562L920 562L970 582" />
          <path d="M487 633L598 487C700 448 810 480 818 583" strokeWidth="6" />
          <path d="M312 583L385 540L440 522L445 532L335 572L320 608L345 612L405 590L450 562M325 600L345 575L390 560L398 585" />
          <path d="M320 608L300 640C282 690 278 740 288 792L268 850L241 890L293 937" />
          <path d="M288 792L302 795L330 830L375 800L405 855L322 885L268 850M288 918L322 885M250 885L293 918L530 878" />
          <path d="M555 630L487 633C400 640 340 650 302 740L297 792M302 740L370 805M463 675C420 700 365 740 366 770L370 800M463 690L375 805M463 682C430 705 375 745 375 770V800" />
          <path d="M463 675L487 633C520 625 560 625 563 640M463 675C465 720 480 750 515 775L568 838V885M375 800L405 855L470 830L515 780M322 885C430 860 500 850 545 820M515 850L530 878L536 909L568 885" />
          <path d="M600 728C590 770 570 800 553 820M585 770L568 838M600 735C640 780 700 780 735 762L785 718C850 640 920 665 955 688M775 600L785 718M735 762C780 762 800 770 820 790L842 805L890 770L905 778M820 790L803 825L815 860M842 805L840 830" />
          <path d="M930 672L945 632L965 630M945 670L955 640M597 728L610 700M755 600L750 640" />
          <path d="M970 582V615L950 688" />
        </g>
        <path d="M312 583C325 555 345 510 366 485M970 590L965 640L950 688C940 730 920 765 900 778L815 860L800 822C750 800 690 800 660 803C620 810 590 825 568 838L530 878L293 918M241 890L293 937L536 909M570 872C610 858 650 841 700 842" stroke="#2b93cf" strokeWidth="4" />
      </g>

      <g transform="translate(1180 300) scale(.33333)" strokeLinejoin="round">
        <path d="M120 1068H158L178 1183H140z" fill="#f0fcf0" stroke="#2ee02e" strokeWidth="3" />
        <g stroke="#ff0" strokeWidth="6">
          <path d="M104 98L1168 90V1098L104 1105z" />
          <path d="M125 205L1187 197V1203L125 1211z" />
          <path d="M146 139L1126 131V1056L146 1063z" />
          <path d="M104 98L125 205M1168 90L1187 197M1168 1098L1187 1203M104 1105L125 1211" />
        </g>
        <path d="M104 60V1105M125 160V1250" stroke="#5aa9f5" strokeWidth="3" strokeDasharray="12 8" />
        <path d="M103 42L128 225M103 42L116 170M101 1148L125 1268M125 1211V1268" stroke="#5aa9f5" strokeWidth="4" />
        <text transform="translate(118 1066) rotate(81)" fill="#22f022" fontSize="36" fontWeight="700" fontFamily="Open Sans, sans-serif">Plane14</text>
        <Dot x={103} y={42} /><Dot x={115} y={100} /><Dot x={126} y={160} /><Dot x={103} y={596} /><Dot x={126} y={713} /><Dot x={101} y={1148} /><Dot x={113} y={1209} /><Dot x={125} y={1268} />
      </g>

      <path d="M1817 165l5-5 6 6 14-13 4 5-18 18z" fill="#d6ead0" />
      <path d="M1866 187l16 16M1882 187l-16 16" stroke="#f2cfcf" strokeWidth="7" strokeLinecap="round" />

      <g>
        <path d="M352 861l-9 19M343 874l0 7 4-2" stroke="#888" strokeWidth="2" /><circle cx="352" cy="861" r="3" fill="#888" />
        <path d="M382 946V926" stroke="#1c6b1c" strokeWidth="4" /><path d="M377 928l5-10 5 10z" fill="#124f12" />
        <path d="M380 948h-18" stroke="#2a2ad0" strokeWidth="4" /><path d="M363 943l-11 5 11 5z" fill="#1a1a9a" />
        <circle cx="381" cy="944" r="4.500" fill="#a11" />
        <text x="378" y="916" fontSize="11" fill="#1c8b1c" fontFamily="Open Sans, sans-serif">Y</text>
        <text x="344" y="952" fontSize="11" fill="#1515e0" fontFamily="Open Sans, sans-serif">Z</text>
      </g>
    </svg>
  );
}

/* ---------- heads-up toolbar ---------- */
const Mag = ({ children }) => <Svg s={18}><circle cx="12" cy="8" r="6.500" fill="#f2f7fa" stroke="#666" strokeWidth="1.300" /><path d="M7 13l-5 5" stroke="#3a80a8" strokeWidth="3.500" />{children}</Svg>;
const H = {
  fit: <Mag><path d="M12 3l2 2h-4zM12 13l2-2h-4zM7 8l2-2v4zM17 8l-2-2v4z" fill="#333" /></Mag>,
  area: <Mag><path d="M6 1h13v14" stroke="#333" strokeDasharray="3 2" /></Mag>,
  prev: <Svg s={18}><path d="M1 15l10-9 5-5 3 4-5 5-8 9z" fill="#ddd" stroke="#555" /><path d="M9 8l4 4M5 11l4 4" stroke="#555" /><path d="M10 15l5-4v2h5v4h-5v2z" fill="#3c92bc" /></Svg>,
  section: <Svg s={18}><path d="M1 5c3-4 15-4 18 0v11l-5 3V9l-5-1v9l-8-1z" {...g} stroke="#c6c6c6" /><path d="M1 8l8 8M1 12l5 5M14 12l5 4" stroke="#c9c9c9" /></Svg>,
  annot: <Svg s={18}><path d="M3 17l8-9 5-6 2 4-5 7-6 6z" fill="#ddd" stroke="#555" /><path d="M9 0L2 6l4 1-4 6 9-8-4-1 5-4z" fill="#f5a623" stroke="#944" strokeWidth=".700" /><path d="M10 19l4-10 4 10M12 16h5" stroke="#2b7fab" strokeWidth="2" /></Svg>,
  orient: <Svg s={18}><path d="M1 7h12v12H1z" fill="#6cb6d8" stroke="#234" /><path d="M1 7l6-5h12l-6 5M19 2v12l-6 5M7 2v5M10 2v5M13 7h6M13 12l6-2" stroke="#333" /></Svg>,
  style: <Svg s={18}><path d="M2 4l8-3 8 3v11l-8 4-8-4z" fill="#9fd3ea" stroke="#234" /><path d="M9 6l9-2v11l-8 4z" fill="#4a9cc4" /><path d="M2 4l7 2v13M9 6l9-2" stroke="#234" /></Svg>,
  eye: <Svg s={18}><path d="M1 10c5-7 13-7 18 0-5 6-13 6-18 0z" fill="#eee" stroke="#777" /><circle cx="10" cy="9.500" r="4" fill="#778" /><circle cx="10" cy="9.500" r="1.500" fill="#111" /></Svg>,
  ball: <Svg><circle cx="9" cy="9" r="8" fill="#ececec" stroke="#c4c4c4" /><path d="M9 1v8h8a8 8 0 0 0-8-8zM9 9H1a8 8 0 0 0 8 8z" fill="#d2d2d2" /><path d="M11 17l3-6 5 6z" fill="#ddd" stroke="#bbb" /></Svg>,
  scene: <Svg><circle cx="11" cy="7" r="6" fill="#e4e4e4" stroke="#bbb" /><path d="M1 15l4-6h10l4 6-6 4H5z" {...g} /><circle cx="7" cy="13" r="4" fill="#ccc" stroke="#bbb" /></Svg>,
  screen: <Svg><path d="M1 3h18v11H1z" fill="#fff" stroke="#444" strokeWidth="1.300" /><path d="M3 5h14v7H3z" fill="#b8dcec" /><path d="M10 14v4M5 18h10" stroke="#444" strokeWidth="1.300" /></Svg>,
};
const HB = ({ i, n, caret, className = "" }) => (
  <><button aria-label={n} className={"flex w-[20px] justify-center " + className}>{i}</button>{caret && <button aria-label={n + " options"} className="flex w-[20px] items-center justify-center"><Caret className="text-[#999]" /></button>}</>
);
const Hud = () => (
  <div className="absolute -top-[17px] left-1/2 z-10 flex h-[20px] -translate-x-1/2 items-center">
    <HB i={H.fit} n="Zoom to fit" className="mr-[6px]" /><HB i={H.area} n="Zoom to area" className="mr-[6px]" /><HB i={H.prev} n="Previous view" className="mr-[6px]" /><HB i={H.section} n="Section view" className="mr-[6px]" /><HB i={H.annot} n="Dynamic annotation" className="mr-[6px]" />
    <HB i={H.orient} n="View orientation" caret /><HB i={H.style} n="Display style" caret /><HB i={H.eye} n="Hide/show" caret />
    <HB i={H.ball} n="Appearance" className="mr-[5px]" /><HB i={H.scene} n="Scene" caret /><HB i={H.screen} n="View settings" caret />
  </div>
);

const TASKPANE = [
  ["Home", <Svg><path d="M4 9v9h12V9l-6-6z" fill="#fff" stroke="#333" /><path d="M8 18v-7h5v7" stroke="#333" /><path d="M1 11l9-9 9 9" stroke="#1f5f80" strokeWidth="3" /></Svg>],
  ["Design library", <Svg><path d="M3 5l3-3 3 0 2-1 3 1 3-1v11l-5 6-6 0-4-2z" fill="#eee" stroke="#333" /><path d="M3 5l3 1v13M6 6l3-4M9 6v13M9 6l4-4M13 6v12M12 6h2l3-4" stroke="#333" /></Svg>],
  ["File explorer", <Svg><path d="M1 17V3h6l2 2h8v3" fill="#bbb" stroke="#333" /><path d="M1 18L6 7h13l-4 11z" fill="#f2f2f2" stroke="#333" /></Svg>],
  ["View palette", <Svg><path d="M1 2h18v16H1z" fill="#fff" stroke="#333" /><path d="M3 4h9v3H3zM14 4h3v3h-3zM7 9h3v3h3v4H3v-4h4z" fill="#f4c411" stroke="#7a5a00" /><path d="M15 10h4v8h-4z" fill="#888" /></Svg>],
  ["Appearances", <Ball />],
  ["Custom properties", <Svg><path d="M1 1h18v18H1z" fill="#fff" stroke="#333" /><path d="M1 1h18v3H1z" fill="#3aa0cf" stroke="#164f6d" /><path d="M3 7h4v1H3zM3 11h4v1H3zM3 15h4v1H3z" stroke="#164f6d" strokeWidth="1.500" /><path d="M10 7.500h7M10 11.500h7M10 15.500h7" stroke="#333" strokeWidth="1.300" /></Svg>],
  ["Forum", <Svg><path d="M1 3h12v8H8l-3 4v-4H1z" fill="#3a93bd" stroke="#164f6d" /><path d="M9 8h10v7h-2v4l-3-4H9z" fill="#fff" stroke="#333" /></Svg>],
];

/* ---------- task bar ---------- */
const SW = ({ y }) => (
  <span className="relative block size-[24px]">
    <svg width="24" height="24" viewBox="0 0 24 24" aria-hidden="true"><path d="M1 4l9-3 13 2-2 14-8 4-10-4z" fill="#c91a22" /><path d="M1 4l9-3 13 2-9 4z" fill="#e85055" /><path d="M14 7l9-4-2 14-8 4z" fill="#8f1017" /></svg>
    <b className="absolute top-[3px] left-[4px] text-[10px] leading-[10px] text-white">SW</b>
    <b className="absolute top-[17px] left-[6px] text-[8px] leading-[8px] text-white">{y}</b>
  </span>
);
const APPS = [
  ["Task view", <Svg s={18} vb="0 0 18 18"><path d="M1 5h10v8H1zM1 0v2h10V0M1 18v-2h10v2M15 0v18" stroke="#fff" /><path d="M13 6h4v3h-4z" fill="#fff" /></Svg>],
  ["File Explorer", <Svg s={22} vb="0 0 24 24"><path d="M1 2h9l2 3h11v17H1z" fill="#fcd462" /><path d="M1 2h7v2H1z" fill="#e8a317" /><path d="M5 13h14v9h-4v-5H9v5H5z" fill="#35a7e8" /></Svg>],
  ["Store", <Svg s={24} vb="0 0 24 24"><path d="M8 7V4c0-3 8-3 8 0v3" stroke="#fff" strokeWidth="1.500" /><path d="M1 6h22v17H1z" fill="#fff" /><path d="M7 9h4v4H7z" fill="#f25022" /><path d="M12 9h5v4h-5z" fill="#7fba00" /><path d="M7 14h4v5H7z" fill="#00a4ef" /><path d="M12 14h5v5h-5z" fill="#ffb900" /></Svg>],
  ["Mail", <Svg s={24} vb="0 0 24 24"><path d="M0 8l12-6 12 6v13H0z" fill="#fff" /><path d="M2 8h20l-8 5 3 4z" fill="#0e1730" /></Svg>],
  ["Chrome", <Svg s={22} vb="0 0 24 24"><path d="M12 12L1.600 6a12 12 0 0 1 20.800 0z" fill="#e5453a" /><path d="M12 12l10.400-6A12 12 0 0 1 12 24z" fill="#fcc934" /><path d="M12 12v12A12 12 0 0 1 1.600 6z" fill="#30a24c" /><circle cx="12" cy="12" r="5.800" fill="#fff" /><circle cx="12" cy="12" r="4.500" fill="#4285f4" /></Svg>, 1],
  ["Rhinoceros", <span className="relative block size-[24px]"><svg width="24" height="24" viewBox="0 0 24 24" aria-hidden="true"><path d="M0 0h24v24H0z" fill="#1a1a1a" /><path d="M0 5l4 6 0-11 5 0 3 11c4 1 9 0 12 2-2 5-5 8-10 11-6-3-11-9-14-19z" fill="#fff" /><path d="M6 14l5 4 6-1M9 3l2 8" stroke="#222" fill="none" /></svg><span className="absolute -top-px right-[1px] text-[10px] leading-[12px] text-white">6</span></span>],
  ["AutoCAD", <Svg s={24} vb="0 0 24 24"><path d="M0 0h24v24H0z" fill="#f9e3df" /><path d="M4 21L10 3h4l6 18h-5l-1-4H9l-1 4zM10 13h3l-1.500-5z" fill="#c4262e" fillRule="evenodd" /></Svg>],
  ["Arduino", <Svg s={23} vb="0 0 24 24"><circle cx="12" cy="12" r="12" fill="#0e9a9f" /><circle cx="8.500" cy="12" r="3.200" stroke="#fff" strokeWidth="1.800" /><circle cx="15.500" cy="12" r="3.200" stroke="#fff" strokeWidth="1.800" /></Svg>],
  ["SolidWorks 2017", <SW y="2017" />],
  ["Edge", <Svg s={22} vb="0 0 24 24"><path d="M1 11C2 4 7 1 12 1c7 0 11 5 11 10v3H8c1 5 8 6 13 3v5c-8 4-18 0-18-9 0-3 2-6 5-7-4 0-6 3-7 5zM8 10h9c0-5-8-5-9 0z" fill="#1a84e0" fillRule="evenodd" /></Svg>],
  ["SolidWorks 2018", <SW y="2018" />],
  ["Cura", <Svg s={24} vb="0 0 24 24"><path d="M7 0h17v17l-7 7H0V7z" fill="#0ea5e3" /><path d="M18 6h-7c-7 0-7 11 0 11h7v-4h-6c-3 0-3-3 0-3h6z" fill="#fff" /></Svg>],
  ["SolidWorks 2018 window", <SW y="2018" />, 2],
];
function Taskbar() {
  const tr = "#fff";
  return (
    <footer className="flex h-[40px] shrink-0 bg-[#0d1630] text-white">
      <button aria-label="Start" className="flex w-[48px] items-center justify-center"><Svg s={16} vb="0 0 16 16"><path d="M0 2.300L7 1.300V7.600H0zM8 1.200L16 0v7.600H8zM0 8.500h7v6.300L0 13.800zM8 8.500h8V16L8 14.900z" fill="#fff" /></Svg></button>
      <label className="mr-px flex w-[344px] items-center bg-[#f2f2f2] pr-[13px] pl-[9px]">
        <Svg s={22} vb="0 0 22 22"><circle cx="11" cy="11" r="8.500" stroke="#111" strokeWidth="2.500" /></Svg>
        <input aria-label="Type here to search" placeholder="Type here to search" className="ml-[9px] min-w-0 flex-1 bg-transparent text-[14px] outline-none placeholder:text-[#3a3a3a]" />
        <Svg s={17} vb="0 0 17 17"><rect x="6" y="1" width="5" height="10" rx="2" stroke="#333" /><path d="M3 8v3c0 4 11 4 11 0V8M8.500 14v3M6 16.500h5" stroke="#333" /></Svg>
      </label>
      {APPS.map(([n, ic, st]) => (
        <button key={n} aria-label={n} className={"relative flex w-[49px] items-center justify-center " + (st === 2 ? "bg-[#3b4358]" : "")}>
          {ic}{st && <span className={"absolute bottom-0 h-[2px] bg-[#76b9ed] " + (st === 2 ? "inset-x-0" : "inset-x-[4px]")} />}
        </button>
      ))}
      <div className="ml-auto flex items-center text-[11px]">
        <button aria-label="People" className="mr-[19px]"><Svg s={16} vb="0 0 16 16"><circle cx="5" cy="8" r="2.500" stroke={tr} /><path d="M1 15c0-5 8-5 8 0" stroke={tr} /><circle cx="11" cy="3.500" r="2.500" stroke={tr} /><path d="M9 8c3-2 6 0 6 3" stroke={tr} /></Svg></button>
        <button aria-label="Hidden icons" className="mr-[11px]"><Svg s={14} vb="0 0 14 14"><path d="M1 10l6-6 6 6" stroke={tr} strokeWidth="1.300" /></Svg></button>
        <button aria-label="Battery" className="mr-[10px]"><Svg s={16} vb="0 0 16 16"><path d="M1 4h12v8H1zM15 6v4" stroke={tr} strokeWidth="1.200" /><path d="M3 6h3v4H3z" fill={tr} /></Svg></button>
        <button aria-label="Network" className="mr-[7px]"><Svg s={14} vb="0 0 14 14"><path d="M1 13C1 6 6 1 13 1M4 13c0-5 4-9 9-9M7 13c0-3 3-6 6-6" stroke="#a9aebb" strokeWidth="1.200" /><circle cx="11.500" cy="11.500" r="2" fill={tr} /></Svg></button>
        <button aria-label="Volume" className="mr-[9px]"><Svg s={18} vb="0 0 18 18"><path d="M1 7h3l4-4v12l-4-4H1zM10 6c2 2 2 4 0 6M12 4c3 3 3 7 0 10M15 2c4 4 4 10 0 14" stroke={tr} /></Svg></button>
        <span className="w-[24px] text-center">ENG</span>
        <span className="ml-[13px] w-[50px] text-center leading-[18px] whitespace-nowrap">12:37 PM<br />5/7/2019</span>
        <button aria-label="Notifications" className="relative ml-[18px] w-[30px]"><Svg s={18} vb="0 0 18 18"><path d="M1 1h16v12h-9l-4 4v-4H1z" fill="#fff" /><path d="M4 4h10M4 7h10M4 10h6" stroke="#0d1630" /></Svg><span className="absolute top-[5px] left-[8px] flex size-[16px] items-center justify-center rounded-full border border-[#777] bg-[#2a2d33] text-[11px]">1</span></button>
        <span className="ml-[7px] h-[40px] w-[5px] border-l border-[#5b6274]" />
      </div>
    </footer>
  );
}

export default function App() {
  return (
    <div className="flex h-screen w-full flex-col overflow-hidden bg-white [font-family:'Open_Sans','Noto_Sans',sans-serif]">
      <TitleBar />
      <Ribbon />
      <div className="flex h-[22px] shrink-0 items-start">
        <div role="tablist" className="flex h-[22px]">
          {TABS.map(([t, w], i) => (
            <button key={t} role="tab" aria-selected={i === 0} className={`${w} border-b border-[#808080] text-[12px] leading-[20px] whitespace-nowrap ${i === 0 ? "bg-[#f7f7f7] font-semibold text-[#333]" : "border-l bg-[#d4d4d4] text-[#222]"} ${i === 6 ? "border-r" : ""}`}>{t}</button>
          ))}
        </div>
        <div className="mt-[7px] mr-[7px] ml-auto flex items-center">
          <button aria-label="Collapse left" className="mr-[10px]"><Svg s={16} vb="0 0 16 16"><path d="M2 2h11v12H2zM2 3h11" stroke="#999" /><path d="M7 5v6L3 8z" fill="#999" /></Svg></button>
          <button aria-label="Collapse right" className="mr-[5px]"><Svg s={16} vb="0 0 16 16"><path d="M2 2h11v12H2zM2 3h11" stroke="#999" /><path d="M8 5v6l4-3z" fill="#999" /></Svg></button>
          <WinButtons color="#999" />
        </div>
      </div>
      <main className="flex min-h-0 flex-1">
        <PropertyPanel />
        <div className="relative flex min-w-0 flex-1 items-start justify-between">
          <Model />
          <Hud />
          <Tree />
          <div className="mt-[28px] flex w-[26px] flex-col border-t border-l border-[#808080]">
            {TASKPANE.map(([n, ic], i) => (
              <button key={n} aria-label={n} className={"flex h-[24px] items-center justify-center border-b border-[#808080] " + (i === 1 ? "bg-[#f7f7f7]" : "bg-[#d4d4d4]")}>{ic}</button>
            ))}
          </div>
        </div>
      </main>
      <div className="flex h-[16px] shrink-0 border-y border-[#808080] bg-[#f7f7f7] text-[12px] leading-[12px] text-[#222]">
        <div className="ml-[2px] flex w-[64px] bg-[#a9a9a9]">
          {["M5 2v8M11 2v8L6 6z", "M10 2v8L5 6z", "M5 2v8l5-4z", "M5 2v8l5-4zM11 2v8"].map((d, i) => (
            <button key={i} aria-label={["First", "Previous", "Next", "Last"][i]} className="w-[16px] border border-[#8d8d8d]"><svg width="14" height="12"><path d={d} fill="#8a8a8a" stroke="#888" /></svg></button>
          ))}
        </div>
        <button className="w-[57px] pb-[2px] pl-[3px] font-bold text-black">Model</button>
        <button className="w-[68px] border-l border-[#808080] bg-[#d4d4d4] pb-[2px]">3D Views</button>
        <button className="w-[109px] border-x border-[#808080] bg-[#d4d4d4] pr-[8px] pb-[2px]">Motion Study 1</button>
      </div>
      <div className="flex h-[18px] shrink-0 items-center bg-[#f7f7f7] pl-px text-[11px] leading-[18px] whitespace-nowrap text-black">
        <span className="flex-1 pt-px text-[12px]">Select the features to mirror</span>
        <span className="w-[163px] pt-px">Normal Distance: 76.5mm</span>
        <span className="w-[8px] border-x border-[#c6c6c6]">&nbsp;</span>
        <span className="w-[71px] pt-px pl-[3px]">Editing Part</span>
        <span className="w-[16px] border-x border-[#c6c6c6]">&nbsp;</span>
        <button className="flex w-[157px] items-center gap-[20px] pt-px pl-[31px] text-[12px] text-[#a6a6a6]">MMGS<Caret className="rotate-180 text-[#888]" /></button>
        <button aria-label="Tags" className="mr-[3px]"><Svg s={17}><path d="M2 5l7-3 9 9-6 6L2 9z" fill="#eee" stroke="#333" /><path d="M2 9v4l10 6 6-5v-3" stroke="#333" /><circle cx="9" cy="8" r="3" stroke="#333" /></Svg></button>
      </div>
      <Taskbar />
    </div>
  );
}
